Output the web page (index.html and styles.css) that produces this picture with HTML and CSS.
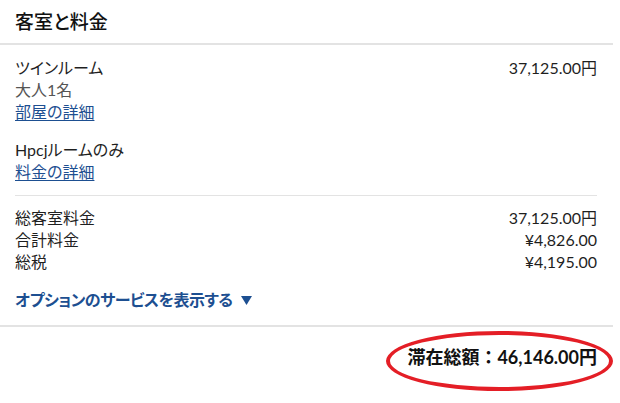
FILE: index.html
```html
<!DOCTYPE html>
<html lang="ja">
<head>
    <meta charset="UTF-8">
    <meta name="viewport" content="width=device-width, initial-scale=1.0">
    <title>客室と料金</title>
    <link rel="stylesheet" href="styles.css">
</head>
<body>
    <div class="panel">
        <!-- Header -->
        <div class="panel-header">
            <h2>客室と料金</h2>
        </div>

        <!-- Room details -->
        <div class="section rooms">
            <div class="row">
                <span>ツインルーム</span>
                <span class="amount">37,125.00円</span>
            </div>
            <div class="muted">大人1名</div>
            <a href="#" class="link">部屋の詳細</a>

            <div class="rate">Hpcjルームのみ</div>
            <a href="#" class="link">料金の詳細</a>
        </div>

        <!-- Totals -->
        <div class="section totals">
            <div class="row">
                <span>総客室料金</span>
                <span class="amount">37,125.00円</span>
            </div>
            <div class="row">
                <span>合計料金</span>
                <span class="amount">¥4,826.00</span>
            </div>
            <div class="row">
                <span>総税</span>
                <span class="amount">¥4,195.00</span>
            </div>

            <a href="#" class="options">オプションのサービスを表示する
                <svg width="11" height="9" viewBox="0 0 11 9"><polygon points="0,0 11,0 5.5,9" fill="currentColor"/></svg>
            </a>
        </div>

        <div class="panel-footer">
            <div class="grand-total">滞在総額：46,146.00円</div>
        </div>
    </div>
</body>
</html>
```

FILE: styles.css
```css
body {
    margin: 0;
    background: #fff;
    font-family: Lato, "Noto Sans CJK JP", sans-serif;
    font-feature-settings: "palt";
    color: #1f1f1f;
    font-size: 16px;
    line-height: 22px;
}
.panel {
    width: 613px;
}
.panel-header {
    height: 43px;
    display: flex;
    align-items: center;
    padding: 0 15px;
    border-bottom: 2px solid #e3e3e3;
}
.panel-header h2 {
    margin: 0;
    font-size: 19px;
    font-weight: 500;
    color: #111;
}
.section {
    margin: 0 16px 0 15px;
}
.rooms {
    padding: 12px 0 12px;
    border-bottom: 1px solid #e3e3e3;
}
.row {
    display: flex;
    justify-content: space-between;
}
.muted {
    color: #555;
}
.link {
    display: block;
    width: max-content;
    color: #1d4f91;
    text-decoration: underline;
    text-underline-offset: 2px;
}
.rate {
    margin-top: 16px;
}
.totals {
    padding: 11px 0 14px;
}
.options {
    display: flex;
    align-items: center;
    gap: 8px;
    margin-top: 16px;
    color: #1d4f91;
    font-size: 16px;
    font-weight: 600;
    letter-spacing: -0.5px;
    text-decoration: none;
}
.panel-footer {
    border-top: 2px solid #e3e3e3;
    padding: 19px 16px 36px 15px;
    display: flex;
    justify-content: flex-end;
}
.grand-total {
    position: relative;
    font-size: 18px;
    font-weight: 700;
    font-feature-settings: normal;
    color: #111;
}
/* red highlight drawn around the total */
.grand-total::after {
    content: "";
    position: absolute;
    left: -21px;
    right: -16px;
    top: -15px;
    bottom: -23px;
    border: 4px solid #e41e26;
    border-radius: 50%;
}
```
